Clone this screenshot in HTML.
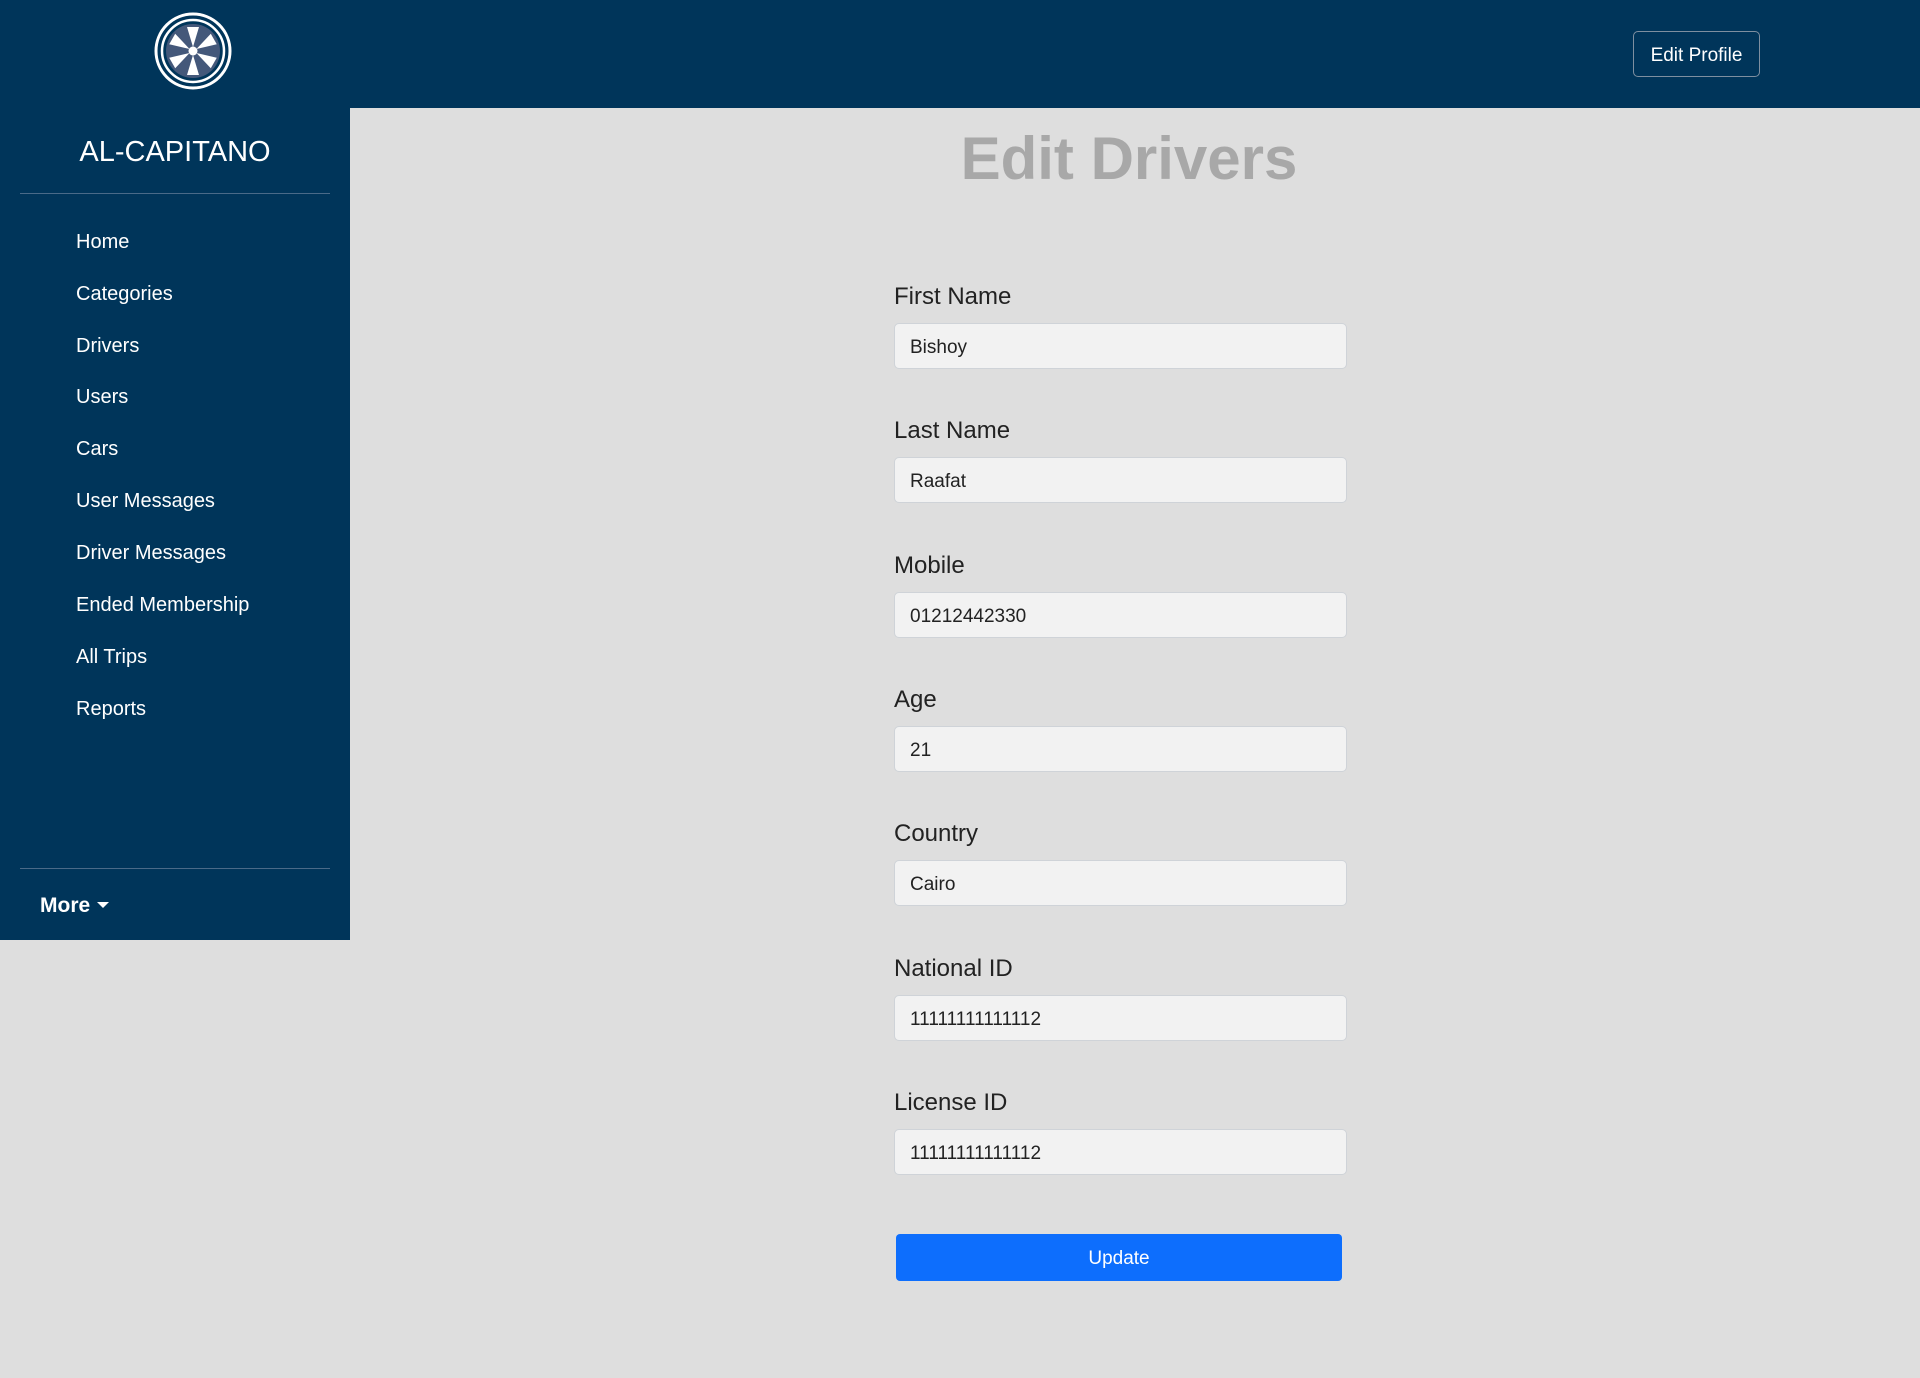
<!DOCTYPE html>
<html><head><meta charset="utf-8"><style>
*{margin:0;padding:0;box-sizing:border-box}
body{width:1920px;height:1378px;background:#dedede;font-family:"Liberation Sans",sans-serif;position:relative;overflow:hidden}
.hdr{position:absolute;left:0;top:0;width:1920px;height:108px;background:#00355a}
.side{position:absolute;left:0;top:0;width:350px;height:940px;background:#00355a}
.brand{position:absolute;left:0;width:350px;top:136px;text-align:center;color:#fff;font-size:29px}
.hr{position:absolute;left:20px;width:310px;height:1px;background:#4a6a88}
.nav a{position:absolute;left:76px;color:#fff;font-size:20px;text-decoration:none;line-height:24px;margin-top:2px}
.more{position:absolute;left:40px;top:894px;color:#fff;font-weight:bold;font-size:21px}
.more:after{content:"";display:inline-block;margin-left:7px;vertical-align:4px;border-left:6px solid transparent;border-right:6px solid transparent;border-top:6px solid #fff}
.ep{position:absolute;left:1633px;top:31px;width:127px;height:46px;border:1px solid #7e8fa0;border-radius:5px;color:#fff;font-size:19px;text-align:center;line-height:48px}
h1{position:absolute;left:350px;right:0;top:119px;text-align:center;color:#a8a8a8;font-size:60px;font-weight:bold;line-height:80px;padding-right:12px}
.lbl{position:absolute;left:894px;font-size:24px;color:#222;line-height:30px;margin-top:2px}
.inp{position:absolute;left:894px;width:453px;height:46px;background:#f2f2f2;border:1px solid #cfd3d8;border-radius:5px;font-size:19px;color:#222;padding-left:15px;line-height:48px}
.btn{position:absolute;left:896px;top:1234px;width:446px;height:47px;background:#0d6efd;border-radius:4px;color:#fff;font-size:19px;text-align:center;line-height:50px}
</style></head><body>
<div class="hdr"></div>
<div class="side"></div>
<svg style="position:absolute;left:153px;top:11px" width="80" height="80" viewBox="0 0 80 80">
<circle cx="40" cy="40" r="37" fill="none" stroke="#fff" stroke-width="3"/>
<circle cx="40" cy="40" r="31" fill="none" stroke="#fff" stroke-width="2.5"/>
<circle cx="40" cy="40" r="27" fill="#44587a"/>
<g fill="#fff">
<polygon points="40,36 34,16 46,16" transform="rotate(0 40 40)"/>
<polygon points="40,36 34,16 46,16" transform="rotate(60 40 40)"/>
<polygon points="40,36 34,16 46,16" transform="rotate(120 40 40)"/>
<polygon points="40,36 34,16 46,16" transform="rotate(180 40 40)"/>
<polygon points="40,36 34,16 46,16" transform="rotate(240 40 40)"/>
<polygon points="40,36 34,16 46,16" transform="rotate(300 40 40)"/>
</g>
<circle cx="40" cy="40" r="4.5" fill="#fff"/>
</svg>
<div class="brand">AL-CAPITANO</div>
<div class="hr" style="top:193px"></div>
<div class="nav">
<a style="top:228px">Home</a>
<a style="top:280px">Categories</a>
<a style="top:332px">Drivers</a>
<a style="top:383px">Users</a>
<a style="top:435px">Cars</a>
<a style="top:487px">User Messages</a>
<a style="top:539px">Driver Messages</a>
<a style="top:591px">Ended Membership</a>
<a style="top:643px">All Trips</a>
<a style="top:695px">Reports</a>
</div>
<div class="hr" style="top:868px"></div>
<div class="more">More</div>
<div class="ep">Edit Profile</div>
<h1>Edit Drivers</h1>
<div class="lbl" style="top:280px">First Name</div><div class="inp" style="top:323px">Bishoy</div>
<div class="lbl" style="top:414px">Last Name</div><div class="inp" style="top:457px">Raafat</div>
<div class="lbl" style="top:549px">Mobile</div><div class="inp" style="top:592px">01212442330</div>
<div class="lbl" style="top:683px">Age</div><div class="inp" style="top:726px">21</div>
<div class="lbl" style="top:817px">Country</div><div class="inp" style="top:860px">Cairo</div>
<div class="lbl" style="top:952px">National ID</div><div class="inp" style="top:995px">11111111111112</div>
<div class="lbl" style="top:1086px">License ID</div><div class="inp" style="top:1129px">11111111111112</div>
<div class="btn">Update</div>
</body></html>
